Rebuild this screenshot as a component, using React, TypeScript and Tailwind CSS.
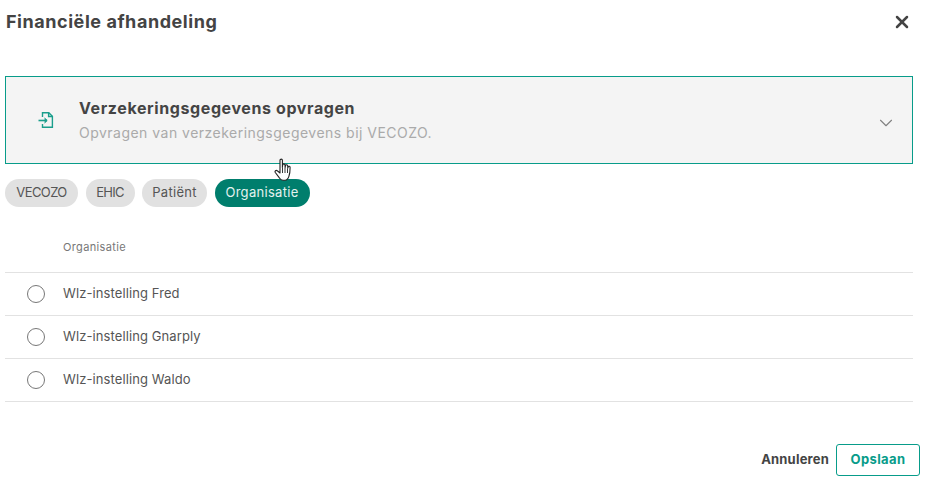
import React, { useState } from "react";
import { X, ChevronDown } from "lucide-react";

const tabs = [
  { label: "VECOZO", cls: "w-[73px] tracking-[-0.6px]" },
  { label: "EHIC", cls: "w-[49px] tracking-[-0.7px]" },
  { label: "Patiënt", cls: "w-[65px] tracking-[0.3px]" },
  { label: "Organisatie", cls: "w-[95px] tracking-[0.3px]" },
];
const rows = ["Wlz-instelling Fred", "Wlz-instelling Gnarply", "Wlz-instelling Waldo"];

function FileInIcon() {
  return (
    <svg width="18" height="18" viewBox="0 0 18 18" fill="none" stroke="#1a9e8c" strokeWidth="1.4">
      <path d="M4.500 6V1.700h6.300l3.600 3.600v11H4.500V13" />
      <path d="M10.600 1.700v3.800h3.800" />
      <path d="M0.500 9.500h8.500" strokeWidth="1.600" />
      <path d="M6.600 7l2.600 2.500L6.600 12" fill="#1a9e8c" strokeWidth="1" />
    </svg>
  );
}

function HandCursor() {
  return (
    <svg width="18" height="25" viewBox="0 0 18 25" className="absolute top-[158px] left-[274px]">
      <path
        d="M6 2.200c0-1.500 2.400-1.500 2.400 0v7.200l.3-2.600c.2-1.300 2.200-1.200 2.300.1l.1 2.700.4-2c.3-1.200 2.100-1 2.200.3l.1 2.300.4-1.300c.4-1 1.900-.7 1.900.5 0 3-.3 6.500-1.200 9-.6 1.800-1.400 3.800-3.900 3.800H9c-1.800 0-2.800-1-3.800-2.500L1.300 14.500c-.9-1.300.8-2.800 2-1.700L6 15V2.200z"
        fill="#fff"
        stroke="#222"
        strokeWidth="1.1"
        strokeLinejoin="round"
      />
      <path d="M8.500 10v5M11 10v5M13.500 10.500V15" stroke="#222" strokeWidth="0.9" />
    </svg>
  );
}

export default function App() {
  const [selected, setSelected] = useState<number | null>(null);

  return (
    <div className="relative h-[477px] w-[932px] overflow-hidden bg-white font-['Inter','Open_Sans',sans-serif] text-[#444]">
      <div className="flex h-[76px] items-start justify-between pt-[10px] pr-[20px] pl-[6px]">
        <h1 className="text-[18px] leading-6 font-bold tracking-[0.55px] text-[#444]">Financiële afhandeling</h1>
        <button className="mt-[2px] text-[#444]">
          <X className="h-[20px] w-[20px]" strokeWidth={3} />
        </button>
      </div>

      <div className="ml-[5px] flex h-[88px] w-[908px] items-center border border-[#089c8a] bg-[#f4f4f4] pr-[15px] pl-[32px]">
        <FileInIcon />
        <div className="mb-[2px] ml-[23px] flex-1">
          <div className="text-[16px] leading-6 font-bold tracking-[0.6px] text-[#444]">Verzekeringsgegevens opvragen</div>
          <div className="mt-[3px] text-[14px] leading-5 tracking-[0.48px] text-[#aaa]">
            Opvragen van verzekeringsgegevens bij VECOZO.
          </div>
        </div>
        <ChevronDown className="mt-[5px] h-[22px] w-[22px] text-[#808080]" strokeWidth={1.2} />
      </div>

      <div className="mt-[15px] ml-[5px] flex gap-[7.5px]">
        {tabs.map((t, i) => (
          <button
            key={t.label}
            className={
              i === 3
                ? `h-[28px] rounded-full bg-[#007e6d] text-[13px] text-[#e4f2ef] ${t.cls}`
                : `h-[28px] rounded-full bg-[#e1e1e1] text-[13px] text-[#555] ${t.cls}`
            }
          >
            {t.label}
          </button>
        ))}
      </div>

      <div className="mx-[5px] mt-[16px] w-[908px]">
        <div className="flex h-[50px] items-start border-b border-[#e2e2e2] pt-[16px] pl-[58px] text-[11px] leading-4 tracking-[0.35px] text-[#777]">
          Organisatie
        </div>
        {rows.map((r, i) => (
          <div
            key={r}
            onClick={() => setSelected(i)}
            className="flex h-[43px] items-center border-b border-[#e2e2e2] text-[13px] tracking-[0.1px] text-[#555]"
          >
            <span className="ml-[22px] flex h-[18px] w-[18px] items-center justify-center rounded-full border border-[#777] bg-white">
              {selected === i && <span className="h-[10px] w-[10px] rounded-full bg-[#007e6d]" />}
            </span>
            <span className="ml-[18px]">{r}</span>
          </div>
        ))}
      </div>

      <div className="mt-[42px] flex items-center justify-end gap-[7px] pr-[12px]">
        <button className="text-[13px] font-bold tracking-[0.2px] text-[#444]">Annuleren</button>
        <button className="h-[32px] w-[84px] rounded-[3px] border border-[#089c8a] bg-white text-[13px] font-bold tracking-[0.4px] text-[#089c8a]">
          Opslaan
        </button>
      </div>

      <HandCursor />
    </div>
  );
}
